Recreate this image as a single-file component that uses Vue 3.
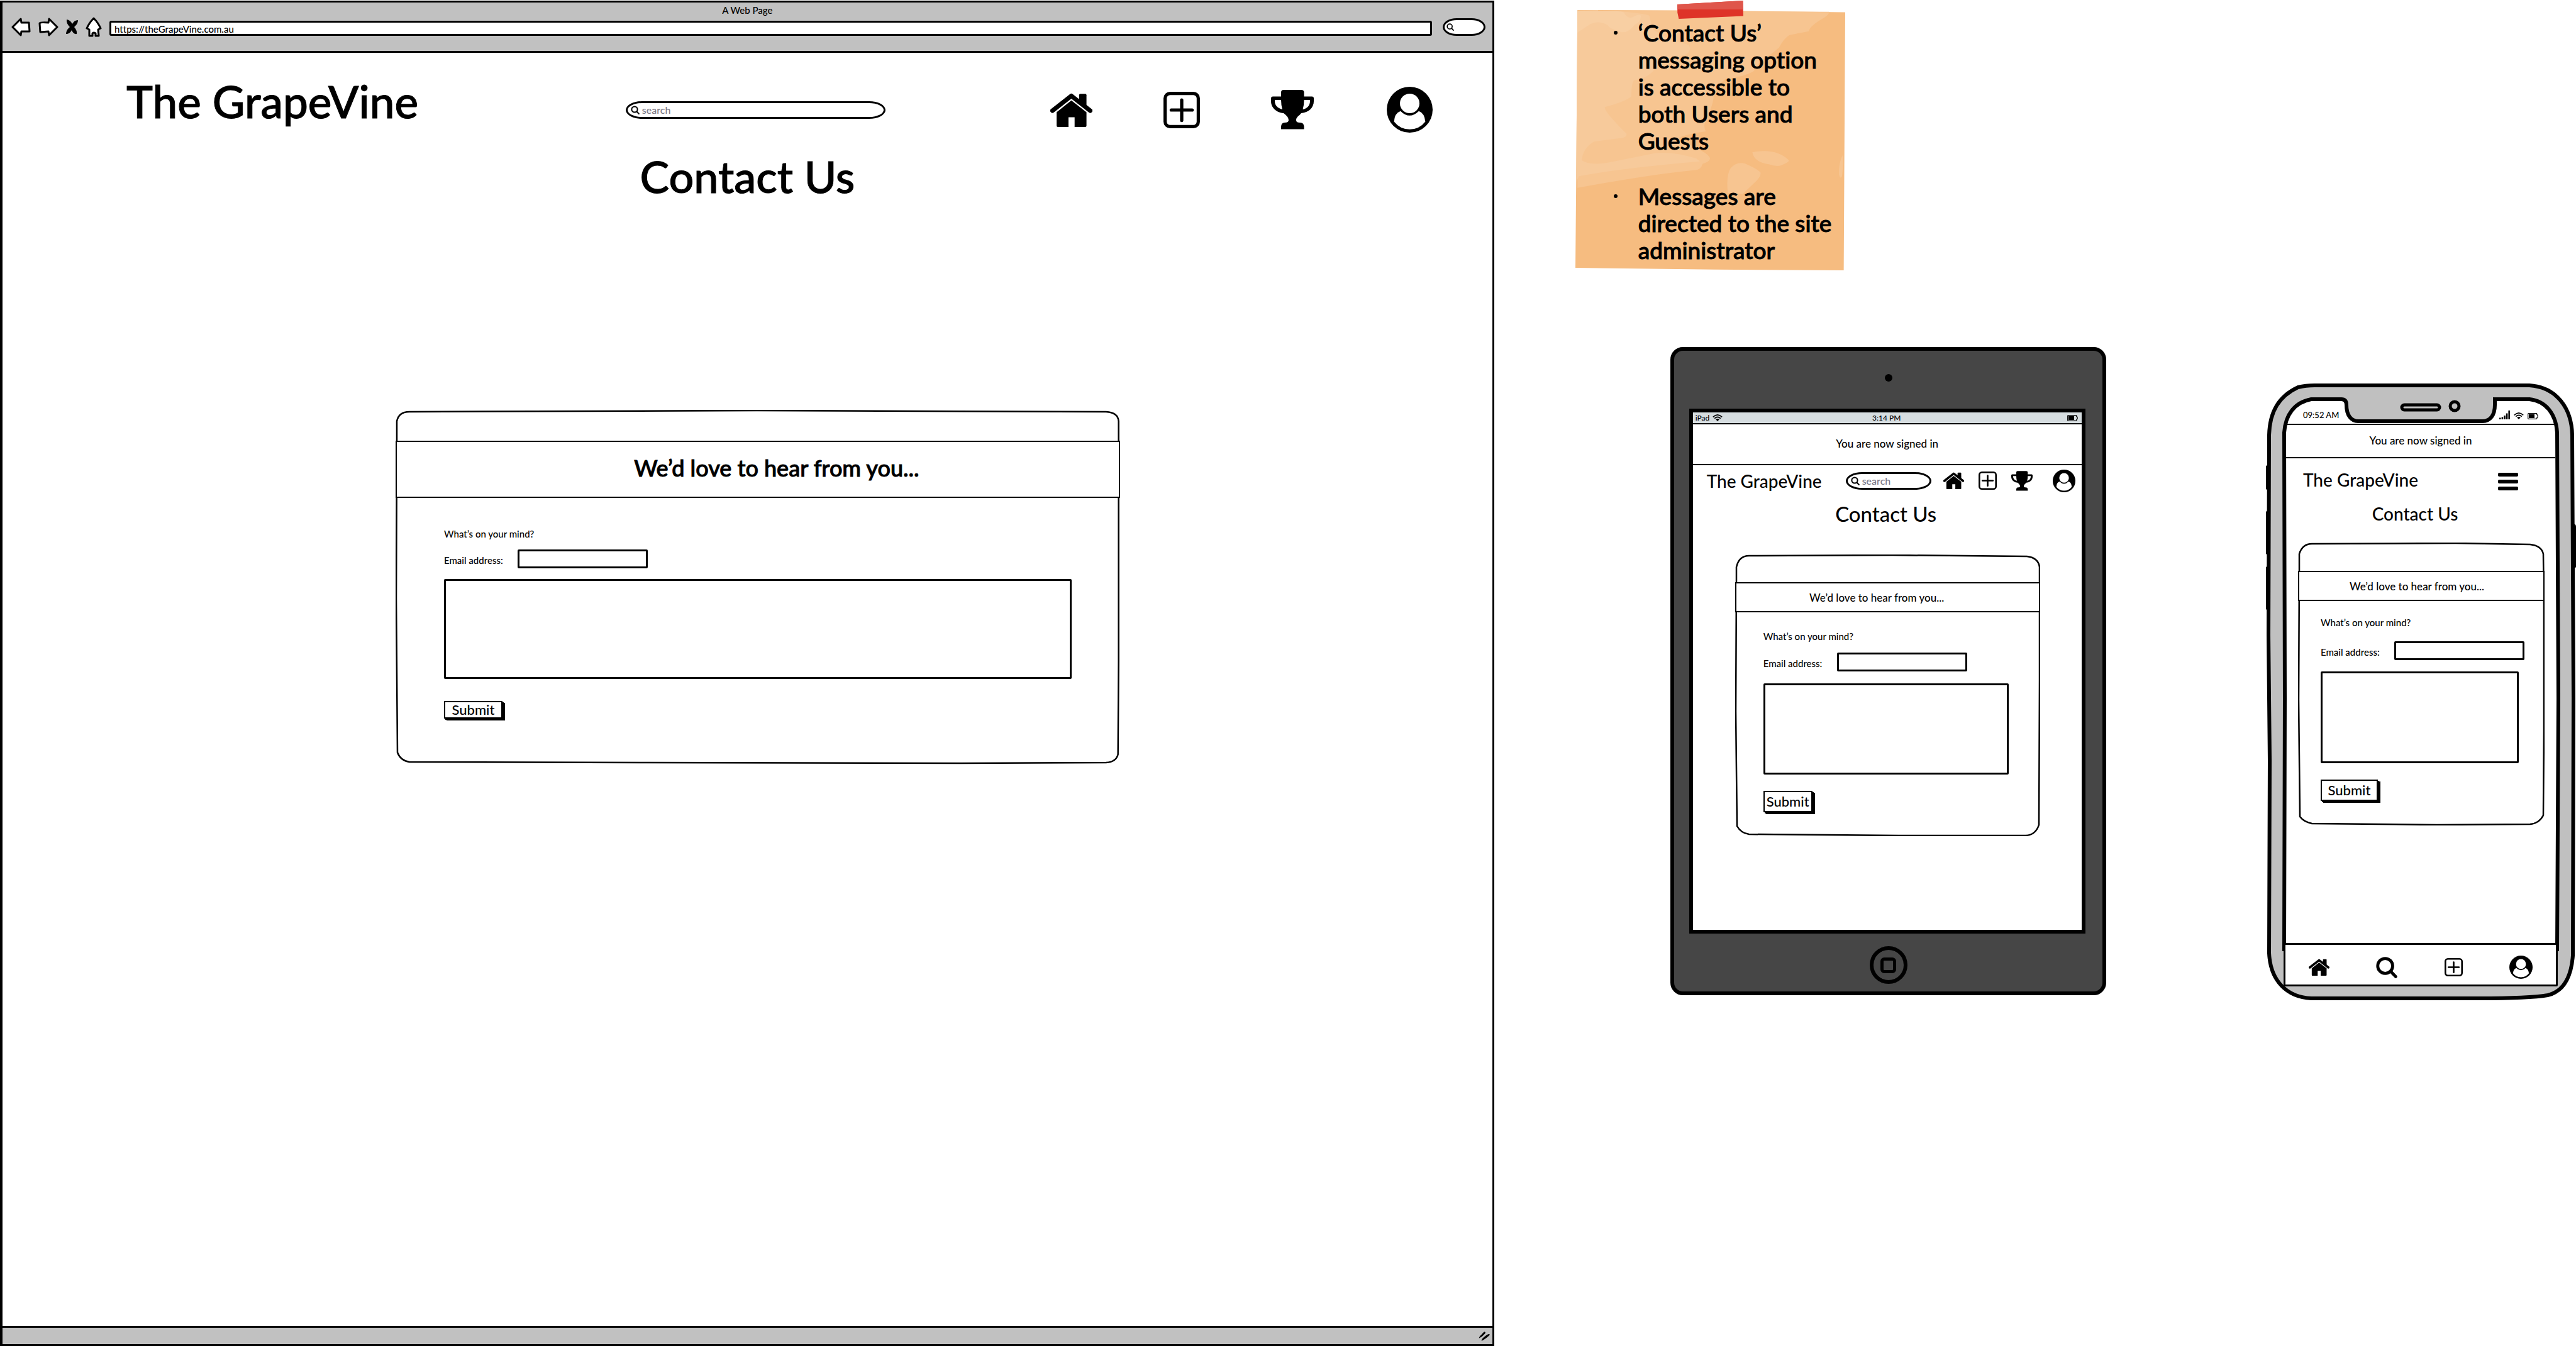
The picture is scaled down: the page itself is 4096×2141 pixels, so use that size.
<script setup>
import { ref } from 'vue'

const address = ref('https://theGrapeVine.com.au')
const webQuery = ref('')
const siteQuery = ref('')
const tabletQuery = ref('')
const emails = ref(['', '', ''])
const messages = ref(['', '', ''])
</script>

<template>
  <svg class="sprite" aria-hidden="true">
    <symbol id="i-home" viewBox="0 0 102 83">
      <path d="M5 43 51 7 97 43" fill="none" stroke="#000" stroke-width="11" stroke-linejoin="round" stroke-linecap="round" />
      <path d="M70 5q0-3 3-3H85q3 0 3 3V32L70 18z" />
      <path d="M15 47 51 18 88 47V80q0 3-3 3H59V59H44V83H18q-3 0-3-3z" />
    </symbol>
    <symbol id="i-plus" viewBox="0 0 89 89">
      <rect x="4" y="4" width="81" height="81" rx="12" fill="none" stroke="#000" stroke-width="8" />
      <path d="M44.500 20V70M19 44.500H70" stroke="#000" stroke-width="8" stroke-linecap="round" />
    </symbol>
    <symbol id="i-trophy" viewBox="0 0 68 63">
      <path fill-rule="evenodd" d="M20 0H48q4.500 0 4.500 4V10.600H65q3 0 3 3V18C68 28 60 36 48 37 44 42 40 43 40 48 40 51 42 52 46 52q6 0 6.500 6v4.600H16V58q.5-6 6-6 6 0 6-4 0-5-8-11C8 36 0 28 0 18V13.600q0-3 3-3H16V4q0-4 4-4zM6 16V18C6 25 12 30 18 31Q16 24 16 16zM52.500 16q0 8-2 15C57 30 62 25 62 18V16z" />
    </symbol>
    <symbol id="i-user" viewBox="0 0 113 113">
      <circle cx="56.500" cy="56.500" r="56.500" />
      <circle cx="56.500" cy="41" r="24" fill="#fff" />
      <path d="M18 86Q19 65 34 60 56 82 79 60 93 65 95 86 80 105 56.500 105 33 105 18 86z" fill="#fff" />
    </symbol>
    <symbol id="i-find" viewBox="0 0 105 106">
      <circle cx="45" cy="45" r="37" fill="none" stroke="#000" stroke-width="15" />
      <path d="M74 74 97 98" stroke="#000" stroke-width="15" stroke-linecap="round" />
    </symbol>
    <symbol id="i-lens" viewBox="0 0 14 14">
      <circle cx="6" cy="6" r="4.600" fill="none" stroke="#000" stroke-width="2" />
      <path d="M9.500 9.500 12.800 13" stroke="#000" stroke-width="2" stroke-linecap="round" />
    </symbol>
    <symbol id="i-wifi" viewBox="0 0 16 11">
      <path d="M.8 4.300Q8-2.400 15.200 4.300M3.200 6.600Q8 2.200 12.800 6.600" fill="none" stroke="#000" stroke-width="1.700" />
      <path d="M5.200 8.200Q8 5.800 10.800 8.200L8 11z" />
    </symbol>
    <symbol id="i-battery" viewBox="0 0 17 10">
      <path d="M1.500.7H14q.8 0 .8.800v1.200q1.500 0 1.500 2.300t-1.500 2.300V8.500q0 .8-.8.800H1.500q-.8 0-.8-.8V1.500q0-.8.8-.8z" fill="none" stroke="#000" stroke-width="1.200" />
      <path d="M2 2h9v6H2z" />
    </symbol>
  </svg>

  <main class="board">
    <section class="browser">
      <header class="chrome">
        <p class="tab-title">A Web Page</p>
        <div class="nav-row">
          <button class="nav-btn" aria-label="Back">
            <svg width="31" height="30" viewBox="0 0 31 30"><path d="M2 15 15 2 16 8 28 8 29 22 16 22 15 28z" /></svg>
          </button>
          <button class="nav-btn" aria-label="Forward">
            <svg width="32" height="30" viewBox="0 0 32 30"><path d="M30 15 17 28 16 22 3 23 2 9Q3 7 16 8L17 2z" /></svg>
          </button>
          <button class="nav-btn" aria-label="Stop">
            <svg width="19" height="30" viewBox="0 0 19 30"><path class="solid" d="M1 3Q7 4 10 10 13 4 19 4 19 10 13 15 18 21 17 26 12 27 9 20 6 26 0 26 0 20 6 15 0 9 1 3z" /></svg>
          </button>
          <button class="nav-btn" aria-label="Home">
            <svg width="26" height="32" viewBox="0 0 26 32"><path d="M13 2Q20 9 24 18L20 20 21 30H16V26Q13 24 11 26V30H6L6 20 2 18Q6 9 13 2z" /></svg>
          </button>
          <input v-model="address" class="url" aria-label="Address" />
          <label class="web-search">
            <svg width="12" height="14"><use href="#i-lens" /></svg>
            <input v-model="webQuery" aria-label="Web search" />
          </label>
        </div>
      </header>

      <div class="page">
        <div class="site-head">
          <h1 class="brand">The GrapeVine</h1>
          <label class="search">
            <svg width="14" height="14"><use href="#i-lens" /></svg>
            <input v-model="siteQuery" placeholder="search" aria-label="Search" />
          </label>
          <nav class="site-nav">
            <a href="#home" aria-label="Home"><svg width="67" height="54"><use href="#i-home" /></svg></a>
            <a href="#add" aria-label="Add"><svg width="58" height="58"><use href="#i-plus" /></svg></a>
            <a href="#awards" aria-label="Awards"><svg width="68" height="63"><use href="#i-trophy" /></svg></a>
            <a href="#account" class="account" aria-label="Account"><svg width="73" height="73"><use href="#i-user" /></svg></a>
          </nav>
        </div>
        <h2 class="page-title">Contact Us</h2>

        <form class="card" @submit.prevent>
          <svg class="outline" viewBox="0 0 1152 564" preserveAspectRatio="none" aria-hidden="true">
            <path d="M2 50V18Q5 3 22 3L575 1 1130 3Q1149 4 1150 18V400L1149 548Q1146 560 1130 561L900 562 400 561 22 560Q8 558 3 545L1 300z" />
          </svg>
          <h3 class="band">We’d love to hear from you...</h3>
          <div class="fields">
            <label for="msg-0" class="small">What’s on your mind?</label>
            <div class="email">
              <label for="mail-0" class="small">Email address:</label>
              <input id="mail-0" v-model="emails[0]" type="email" />
            </div>
            <textarea id="msg-0" v-model="messages[0]"></textarea>
            <button class="submit">Submit</button>
          </div>
        </form>
      </div>

      <footer class="status">
        <svg width="20" height="16" viewBox="0 0 29 23" aria-hidden="true">
          <path d="M1 17Q1 13 8 7 13 1 14 2 17 2 15 6 8 14 1 17zM7 23Q6 19 14 13 21 7 24 7 28 7 23 12 14 20 7 23z" />
        </svg>
      </footer>
    </section>

    <section class="side">
      <aside class="note">
        <svg class="paper" viewBox="51 58 1450 1468" preserveAspectRatio="none" aria-hidden="true">
          <path fill="#f6bc80" d="M62 58 800 61 1501 70 1493 1526 800 1522 51 1512 55 1040z" />
          <path fill="#f7c591" d="M62 60 1414 68Q1418 85 1370 112 1310 150 1305 178 1220 195 1200 200 1170 220 1145 270 1090 320 1050 342 1015 390 1010 402 960 435 860 445 800 490 795 540 790 600 745 700 742 725 752 742 650 755 590 785 770 860 775 895 770 915 735 925 725 960 695 960 450 985 62 1061z" />
          <path fill="#f7ca9b" d="M62 62 300 66Q440 80 448 90 460 140 470 170 560 230 660 255 680 290 640 310 500 350 480 385 450 440 365 455 350 480 352 545 320 575 210 605 200 625 325 755 330 775 300 780L150 800Q90 840 85 905 120 935 220 920L480 865Q580 855 700 895L720 912Q300 950 70 995L55 1030z" />
          <path fill="#f8cfa3" d="M62 62 270 64Q320 66 315 80 340 110 360 97 400 75 403 92 400 130 370 140 330 195 290 180 230 160 225 143 170 110 120 145L62 185z" />
          <path fill="#f7c591" d="M1002 860Q1130 835 1198 905 1200 915 1165 930 1140 945 1090 928 1010 915 1002 860zM870 1090Q860 990 885 950 920 910 965 925 1040 960 1046 975 1050 1000 1005 1040L950 1095zM1488 875Q1465 920 1468 985 1475 1015 1484 995 1492 920 1488 875z" />
        </svg>
        <svg class="tape" viewBox="599 2 354 102" preserveAspectRatio="none" aria-hidden="true">
          <path fill="#de3328" d="M599 23 951 2 953 88 607 104 600 70z" />
          <path fill="#df564b" d="M599 23 951 2 952 51H600z" />
        </svg>
        <ul>
          <li>‘Contact Us’<br />messaging option<br />is accessible to<br />both Users and<br />Guests</li>
          <li>Messages are<br />directed to the site<br />administrator</li>
        </ul>
      </aside>

      <div class="devices">
        <section class="tablet">
          <div class="bezel-top"><span class="camera"></span></div>
          <div class="tablet-screen">
            <div class="tablet-status">
              <span class="carrier">iPad <svg width="16" height="11"><use href="#i-wifi" /></svg></span>
              <span>3:14 PM</span>
              <span class="charge"><svg width="17" height="10"><use href="#i-battery" /></svg></span>
            </div>
            <p class="notice">You are now signed in</p>
            <div class="tablet-head">
              <h1 class="brand">The GrapeVine</h1>
              <label class="search">
                <svg width="14" height="14"><use href="#i-lens" /></svg>
                <input v-model="tabletQuery" placeholder="search" aria-label="Search" />
              </label>
              <nav class="tablet-nav">
                <a href="#home" aria-label="Home"><svg width="33" height="27"><use href="#i-home" /></svg></a>
                <a href="#add" aria-label="Add"><svg width="29" height="29"><use href="#i-plus" /></svg></a>
                <a href="#awards" aria-label="Awards"><svg width="34" height="32"><use href="#i-trophy" /></svg></a>
              </nav>
              <a href="#account" aria-label="Account"><svg width="36" height="36"><use href="#i-user" /></svg></a>
            </div>
            <h2 class="page-title">Contact Us</h2>
            <form class="card" @submit.prevent>
              <svg class="outline" viewBox="0 0 485 448" preserveAspectRatio="none" aria-hidden="true">
                <path d="M2 44V20Q6 2 22 2L250 1 464 3Q482 5 484 20V200L483 430Q478 446 462 447L260 447 22 445Q9 443 3 432L1 250z" />
              </svg>
              <h3 class="band">We’d love to hear from you...</h3>
              <div class="fields">
                <label for="msg-1" class="small">What’s on your mind?</label>
                <div class="email">
                  <label for="mail-1" class="small">Email address:</label>
                  <input id="mail-1" v-model="emails[1]" type="email" />
                </div>
                <textarea id="msg-1" v-model="messages[1]"></textarea>
                <button class="submit">Submit</button>
              </div>
            </form>
          </div>
          <div class="bezel-bottom"><span class="home-key"><span></span></span></div>
        </section>

        <section class="phone">
          <svg class="shell" viewBox="0 0 494 981" preserveAspectRatio="none" aria-hidden="true">
            <path d="M1 131 6 129V171L1 168zM1 204 6 200V274L1 271zM1 292 6 289V363L1 359zM488 224Q494 222 494 228V292L490 296z" fill="#000" />
            <path d="M6 82C7 44 22 20 52 6Q64 3 78 3H420C464 6 487 40 488 82L490 500 489 910C486 950 470 968 449 973Q420 978 339 978H73C34 976 8 950 6 906L7 600 5 400z" fill="#c0c0c0" stroke="#000" stroke-width="6" />
            <path d="M30 78C32 50 46 30 73 25H121Q129 25 129 34C129 50 136 60 148 60H345C358 60 365 50 365 34V25H420C446 28 462 48 464 78L466 500 464 900H30L31 500z" fill="#fff" stroke="#000" stroke-width="6" />
            <rect x="217" y="34" width="60" height="8" rx="4" fill="#c0c0c0" stroke="#000" stroke-width="5" />
            <circle cx="301" cy="36" r="7" fill="#c0c0c0" stroke="#000" stroke-width="5" />
          </svg>
          <div class="phone-screen">
            <div class="phone-status">
              <span>09:52 AM</span>
              <span class="signals">
                <svg width="17" height="14" viewBox="0 0 17 14"><path d="M0 11.500h2.600V14H0zM3.600 10.500h2.600V14H3.600zM7.200 8h2.600v6H7.200zM10.800 4.500h2.600V14h-2.600zM14.400 0H17v14h-2.600z" /></svg>
                <svg width="16" height="11"><use href="#i-wifi" /></svg>
                <svg width="17" height="10"><use href="#i-battery" /></svg>
              </span>
            </div>
            <p class="notice">You are now signed in</p>
            <div class="phone-head">
              <h1 class="brand">The GrapeVine</h1>
              <button class="menu" aria-label="Menu"><i></i><i></i><i></i></button>
            </div>
            <h2 class="page-title">Contact Us</h2>
            <form class="card" @submit.prevent>
              <svg class="outline" viewBox="0 0 391 450" preserveAspectRatio="none" aria-hidden="true">
                <path d="M2 45V18Q7 2 22 2L250 1 368 3Q386 5 389 18L390 100V300L389 434Q382 447 368 448L220 449 22 447Q9 444 3 436L1 250z" />
              </svg>
              <h3 class="band">We’d love to hear from you...</h3>
              <div class="fields">
                <label for="msg-2" class="small">What’s on your mind?</label>
                <div class="email">
                  <label for="mail-2" class="small">Email address:</label>
                  <input id="mail-2" v-model="emails[2]" type="email" />
                </div>
                <textarea id="msg-2" v-model="messages[2]"></textarea>
                <button class="submit">Submit</button>
              </div>
            </form>
            <nav class="dock">
              <a href="#home" aria-label="Home"><svg width="33" height="27"><use href="#i-home" /></svg></a>
              <a href="#find" aria-label="Search"><svg width="34" height="34"><use href="#i-find" /></svg></a>
              <a href="#add" aria-label="Add"><svg width="29" height="29"><use href="#i-plus" /></svg></a>
              <a href="#account" aria-label="Account"><svg width="37" height="37"><use href="#i-user" /></svg></a>
            </nav>
          </div>
        </section>
      </div>
    </section>
  </main>
</template>

<style>
body {
  margin: 0;
  background: #fff;
}
</style>

<style scoped>
.sprite {
  position: absolute;
  width: 0;
  height: 0;
}
.board,
.board * {
  box-sizing: border-box;
}
.board {
  display: flex;
  min-height: 100vh;
  font-family: Lato, "Open Sans", sans-serif;
  font-size: 15px;
  font-weight: 500;
  font-variant-ligatures: none;
  color: #000;
}
h1, h2, h3, p, ul {
  margin: 0;
  padding: 0;
  font-weight: 500;
}
svg {
  display: block;
  flex: none;
}
a {
  display: block;
  color: inherit;
}
button, input, textarea {
  margin: 0;
  padding: 0;
  border: 0;
  border-radius: 0;
  background: none;
  font: inherit;
  color: inherit;
  outline: none;
}

/* browser window */
.browser {
  flex: 0 0 58%;
  display: flex;
  flex-direction: column;
  margin-top: 1px;
  border: 3px solid #000;
  border-left-width: 4px;
}
.chrome {
  height: 80px;
  background: #c1c1c1;
  border-bottom: 3px solid #000;
}
.tab-title {
  height: 23px;
  line-height: 25px;
  text-align: center;
}
.nav-row {
  display: flex;
  align-items: center;
  gap: 12px;
  height: 32px;
  padding: 0 11px 0 14px;
}
.nav-btn path {
  fill: #fff;
  stroke: #000;
  stroke-width: 3;
  stroke-linejoin: round;
}
.nav-btn path.solid {
  fill: #000;
  stroke: none;
}
.url {
  flex: 1;
  min-width: 0;
  height: 24px;
  padding: 1px 5px 0;
  margin-top: 4px;
  background: #fff;
  border: 3px solid #000;
  border-radius: 3px;
  line-height: 17px;
}
.web-search {
  display: flex;
  align-items: center;
  width: 68px;
  height: 28px;
  margin-left: 5px;
  padding-left: 3px;
  background: #fff;
  border: 3px solid #000;
  border-radius: 22px / 14px;
}
.web-search input {
  flex: 1;
  min-width: 0;
}
.page {
  flex: 1;
  padding-top: 54px;
}
.site-head {
  display: grid;
  grid-template-columns: 1fr 413px 1fr;
  align-items: center;
  padding: 0 95px 0 121px;
}
.site-head .brand {
  align-self: start;
  padding-left: 76px;
  line-height: 46px;
  font-size: 71px;
  -webkit-text-stroke: 1px #000;
}
.search {
  display: flex;
  align-items: center;
  height: 28px;
  padding-left: 5px;
  border: 3px solid #000;
  border-radius: 26px / 14px;
  background: #fff;
}
.search input {
  flex: 1;
  min-width: 0;
  padding-left: 4px;
  line-height: 20px;
  font-size: 16px;
}
.search input::placeholder {
  color: #7b7985;
  opacity: 1;
}
.site-nav {
  display: flex;
  align-items: center;
  justify-content: flex-end;
  gap: 113px;
}
.account {
  padding-left: 3px;
}
.page-title {
  text-align: center;
}
.page > .page-title {
  margin-top: 33px;
  line-height: 72px;
  font-size: 70px;
  -webkit-text-stroke: 1px #000;
}
.page > .card {
  margin: 336px 592px 0 625px;
  padding-top: 49px;
}
.status {
  display: flex;
  align-items: center;
  justify-content: flex-end;
  height: 29px;
  padding-right: 2px;
  background: #c1c1c1;
  border-top: 3px solid #000;
}

/* contact card */
.card {
  position: relative;
}
.outline {
  position: absolute;
  inset: 0;
  width: 100%;
  height: 100%;
}
.outline path {
  fill: #fff;
  stroke: #000;
  stroke-width: 2.500;
}
.band {
  position: relative;
  text-align: center;
  background: #fff;
  border: 2px solid #000;
}
.fields {
  position: relative;
  display: flex;
  flex-direction: column;
  align-items: flex-start;
}
.small {
  line-height: 24px;
}
.email {
  display: flex;
  align-items: center;
  gap: 20px;
}
.email .small {
  width: 97px;
  padding-top: 4px;
  white-space: nowrap;
}
.email input {
  flex: none;
  width: 207px;
  height: 30px;
  border: 3px solid #000;
  border-radius: 2px;
}
textarea {
  display: block;
  align-self: stretch;
  border: 3px solid #000;
  border-radius: 2px;
  resize: none;
}
.submit {
  display: flex;
  align-items: center;
  justify-content: center;
  border: 2px solid #000;
  background: #fff;
  box-shadow: 2px 2px 0 #000, 4px 3px 0 #000;
  font-size: 22px;
  line-height: 24px;
}
.page .band {
  height: 91px;
  padding: 0 0 6px 60px;
  line-height: 82px;
  font-size: 36px;
  -webkit-text-stroke: 1px #000;
}
.page .fields {
  padding: 45px 77px 73px;
}
.page .email {
  margin-top: 13px;
}
.page textarea {
  height: 159px;
  margin-top: 17px;
}
.page .submit {
  width: 93px;
  height: 28px;
  margin-top: 35px;
}

/* sticky note */
.side {
  flex: 1;
  min-width: 0;
}
.note {
  position: relative;
  width: 429px;
  height: 414px;
  margin: 16px 0 0 129px;
  padding-top: 14px;
}
.paper {
  position: absolute;
  inset: 0;
  width: 100%;
  height: 100%;
}
.tape {
  position: absolute;
  top: -15px;
  left: 162px;
  width: 105px;
  height: 29px;
}
.note ul {
  position: relative;
  display: flex;
  flex-direction: column;
  gap: 45px;
  padding-left: 100px;
  list-style: none;
  white-space: nowrap;
  line-height: 43px;
  font-size: 37px;
  -webkit-text-stroke: 1px #000;
}
.note li {
  position: relative;
}
.note li::before {
  content: "";
  position: absolute;
  top: 19px;
  left: -39px;
  width: 6px;
  height: 6px;
  border-radius: 50%;
  background: #000;
}

/* devices */
.devices {
  display: flex;
  justify-content: space-between;
  align-items: flex-start;
  margin-top: 122px;
  padding-left: 280px;
}
.notice {
  border-bottom: 2px solid #000;
  text-align: center;
  font-size: 17px;
}
.devices .brand {
  font-size: 28px;
  line-height: 36px;
  white-space: nowrap;
}
.devices .band {
  height: 48px;
  line-height: 45px;
  font-size: 17px;
}
.tablet {
  width: 693px;
  padding: 0 27px 0 24px;
  border: 6px solid #000;
  border-radius: 20px;
  background: #464646;
}
.bezel-top {
  display: flex;
  align-items: center;
  justify-content: center;
  height: 92px;
  padding: 0 0 6px 4px;
}
.camera {
  width: 12px;
  height: 12px;
  border-radius: 50%;
  background: #000;
}
.tablet-screen {
  min-height: 835px;
  border: 6px solid #000;
  background: #fff;
}
.tablet-status {
  display: grid;
  grid-template-columns: 1fr auto 1fr;
  align-items: center;
  height: 19px;
  padding: 0 6px 0 4px;
  background: #d6dde0;
  border-bottom: 2px solid #000;
  font-size: 12px;
  line-height: 17px;
}
.carrier {
  display: flex;
  align-items: center;
  gap: 5px;
}
.charge {
  justify-self: end;
}
.tablet .notice {
  height: 65px;
  line-height: 62px;
}
.tablet-head {
  display: flex;
  align-items: center;
  height: 49px;
  padding: 0 10px 0 22px;
}
.tablet-head .brand {
  flex: 1;
}
.tablet-head .search {
  width: 136px;
}
.tablet-nav {
  display: flex;
  align-items: center;
  gap: 23px;
  margin: 0 32px 0 19px;
}
.tablet .page-title {
  margin-top: 8px;
  padding-right: 4px;
  line-height: 40px;
  font-size: 33px;
}
.tablet .card {
  margin: 45px 66px 0 67px;
  padding-top: 44px;
}
.tablet .band {
  padding-right: 34px;
}
.tablet .fields {
  padding: 26px 50px 38px 45px;
}
.tablet .email {
  margin-top: 14px;
}
.tablet textarea {
  height: 145px;
  margin-top: 19px;
}
.tablet .submit {
  width: 78px;
  height: 34px;
  margin-top: 26px;
}
.bezel-bottom {
  display: flex;
  align-items: center;
  justify-content: center;
  height: 92px;
  padding: 8px 0 0 4px;
}
.home-key {
  display: flex;
  align-items: center;
  justify-content: center;
  width: 60px;
  height: 60px;
  border: 6px solid #000;
  border-radius: 50%;
}
.home-key span {
  width: 25px;
  height: 25px;
  border: 5px solid #000;
  border-radius: 6px;
}

.phone {
  position: relative;
  display: flex;
  width: 494px;
  min-height: 981px;
  margin-top: 58px;
  padding: 28px 33px 22px;
}
.shell {
  position: absolute;
  inset: 0;
  width: 100%;
  height: 100%;
}
.phone-screen {
  position: relative;
  flex: 1;
  min-width: 0;
  display: flex;
  flex-direction: column;
}
.phone-status {
  display: flex;
  align-items: flex-end;
  justify-content: space-between;
  height: 36px;
  padding: 0 27px 7px;
  font-size: 13px;
  line-height: 14px;
}
.signals {
  display: flex;
  align-items: flex-end;
  gap: 6px;
}
.phone .notice {
  height: 55px;
  border-top: 2px solid #000;
  line-height: 49px;
}
.phone-head {
  display: flex;
  align-items: center;
  justify-content: space-between;
  height: 68px;
  padding: 0 59px 0 27px;
}
.menu {
  display: flex;
  flex-direction: column;
  gap: 5px;
  padding-top: 5px;
}
.menu i {
  width: 32px;
  height: 6px;
  border-radius: 2px;
  background: #000;
}
.phone .page-title {
  padding-right: 18px;
  line-height: 40px;
  font-size: 28px;
}
.phone .card {
  margin: 26px 17px 0 19px;
  padding-top: 45px;
}
.phone .band {
  padding-right: 14px;
}
.phone .fields {
  padding: 22px 41px 39px 36px;
}
.phone .email {
  margin-top: 18px;
}
.phone textarea {
  height: 146px;
  margin-top: 18px;
}
.phone .submit {
  width: 91px;
  height: 34px;
  margin-top: 26px;
}
.dock {
  display: flex;
  align-items: center;
  justify-content: space-around;
  height: 69px;
  margin: auto -4px 0;
  padding-top: 8px;
  border: 3px solid #000;
  border-radius: 2px;
  background: #fff;
}
</style>
